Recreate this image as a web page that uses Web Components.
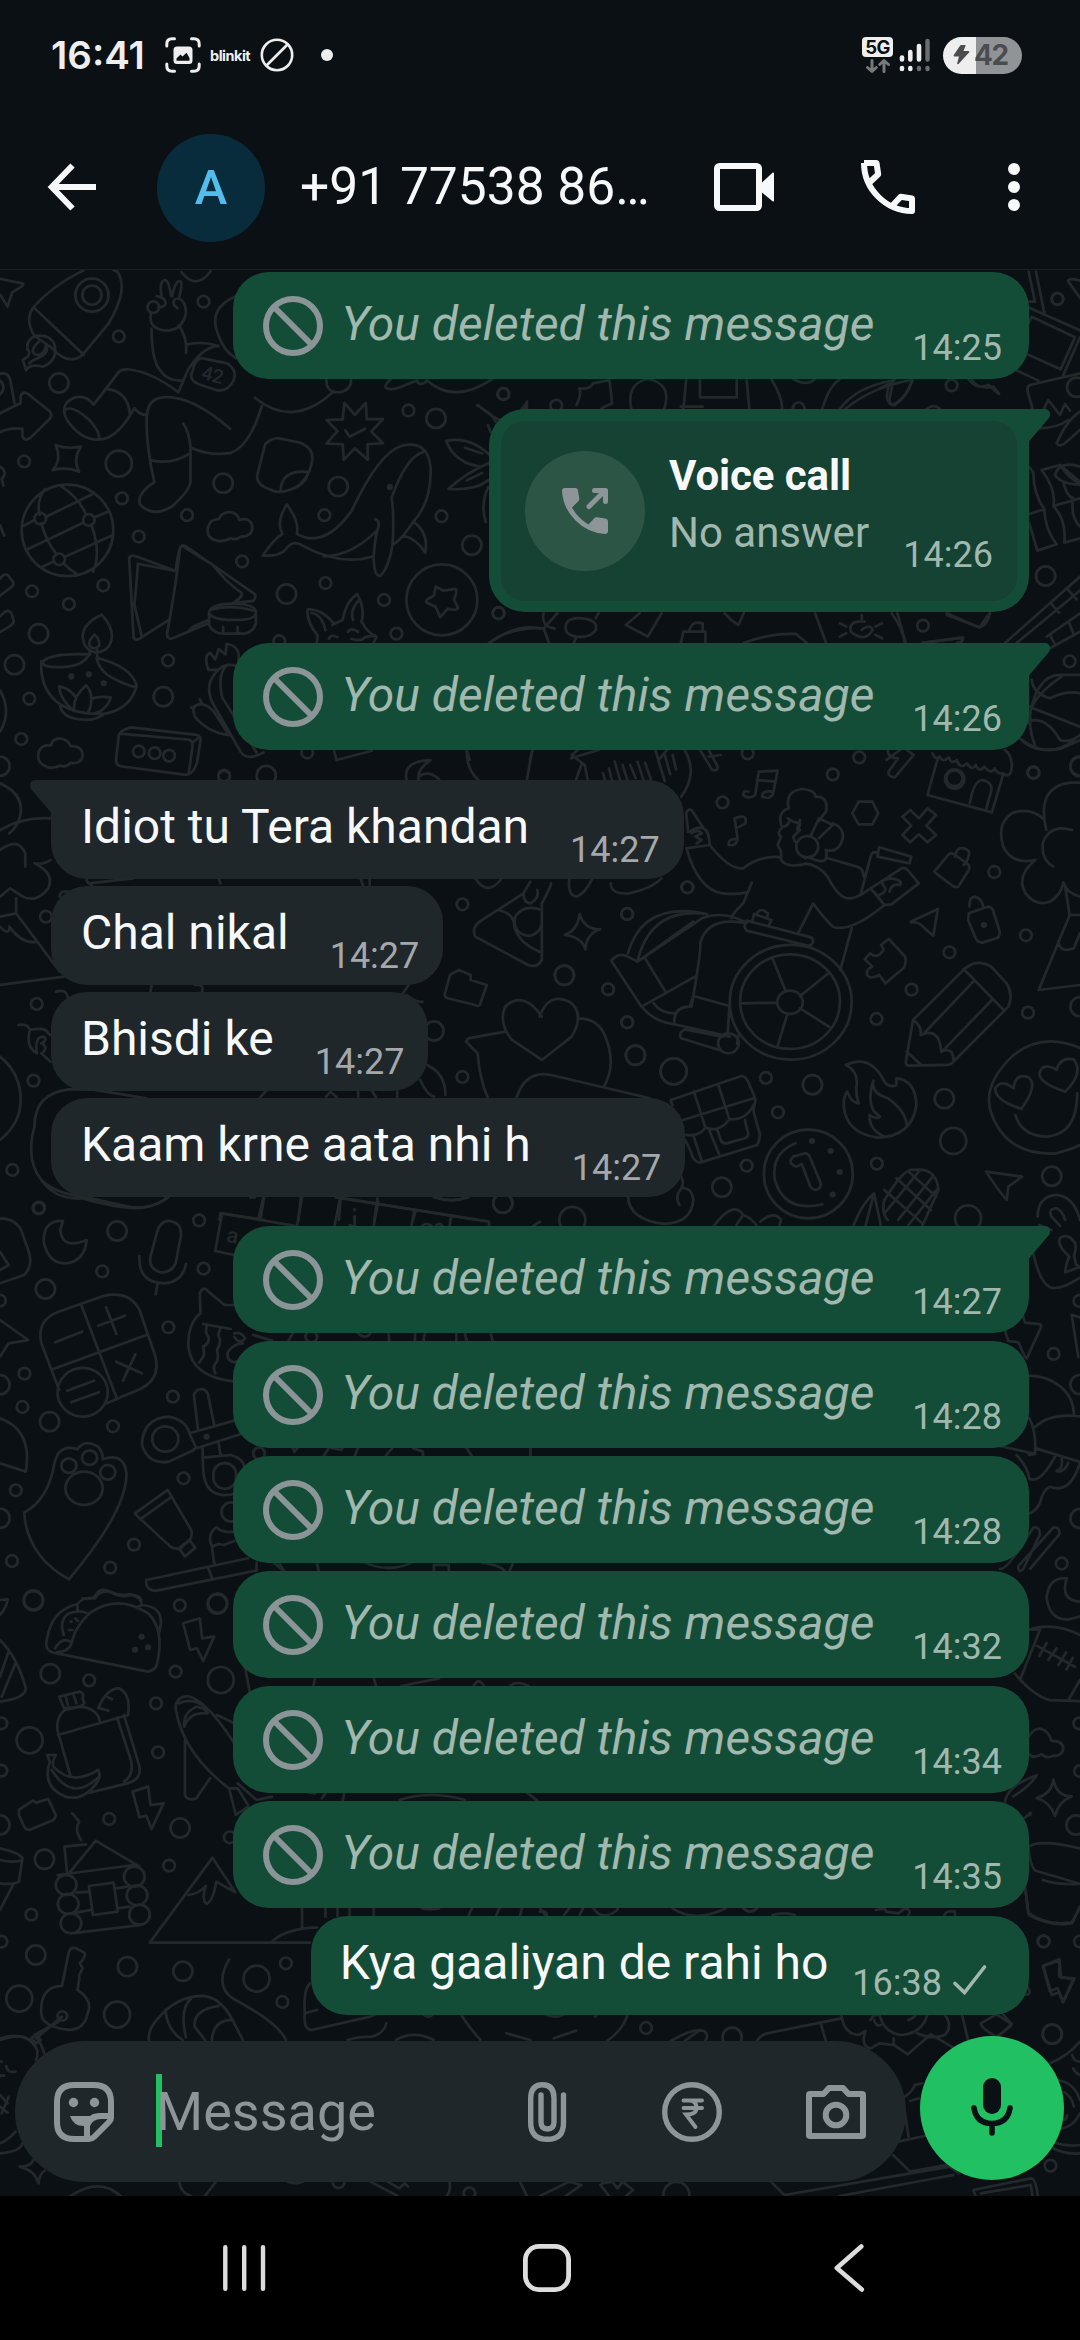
<!DOCTYPE html>
<html lang="en">
<head>
<meta charset="utf-8">
<title>Chat</title>
<style>
html,body{margin:0;padding:0;background:#0b1014}
body{width:1080px;height:2340px;overflow:hidden;font-family:Roboto,"Liberation Sans",sans-serif;color:#f7f8fa}
</style>
</head>
<body>
<phone-screen></phone-screen>
<script>
const define = (name, html, setup) => customElements.define(name, class extends HTMLElement {
  constructor(){
    super();
    const root = this.attachShadow({mode:'open'});
    const t = document.createElement('template');
    t.innerHTML = html;
    root.append(t.content.cloneNode(true));
  }
  connectedCallback(){ if (setup) setup(this, this.shadowRoot); }
});

/* ---------- icons ---------- */
const ICONS = {
  back:['0 0 48 48','<path d="M24.5 2.5 3.8 24 24.5 45.5M4 24H48" fill="none" stroke="currentColor" stroke-width="6"/>'],
  video:['0 0 60 48','<rect x="3" y="3" width="42" height="42" rx="2.5" fill="none" stroke="currentColor" stroke-width="6"/><path d="M48 19.5 58.5 9.8Q60 9 60 10.8V37.2Q60 39 58.5 38.2L48 29.5Z" fill="currentColor"/>'],
  call:['0 0 54 54','<path d="M3 3H15.500L17.200 14.300 8.300 22.700M3 3C3 29 25 51 51 51V38.500L39.700 36.700 31.500 45.500" fill="none" stroke="currentColor" stroke-width="6" stroke-linejoin="round"/>'],
  more:['0 0 12 48','<g fill="currentColor"><circle cx="6" cy="6" r="6"/><circle cx="6" cy="24" r="6"/><circle cx="6" cy="42" r="6"/></g>'],
  ban:['0 0 60 60','<g fill="none" stroke="currentColor" stroke-width="6"><circle cx="30" cy="30" r="27"/><path d="M11.5 11.5 48.5 48.5"/></g>'],
  block:['0 0 34 34','<g fill="none" stroke="currentColor" stroke-width="2.6"><circle cx="17" cy="17" r="15.2"/><path d="M6.5 27.5 27.5 6.5"/></g>'],
  shot:['0 0 36 36','<g fill="none" stroke="currentColor" stroke-width="3" stroke-linecap="round"><path d="M1.8 9V7Q1.800 1.800 7 1.800H9.500M26.500 1.800H29Q34.200 1.800 34.200 7V9M34.200 27V29Q34.200 34.200 29 34.200H26.500M9.500 34.200H7Q1.800 34.200 1.800 29V27"/></g><path fill="currentColor" fill-rule="evenodd" d="M12 9.500H24Q27.500 9.500 27.500 13V23.500Q27.500 27 24 27H12Q8.500 27 8.500 23.500V13Q8.500 9.500 12 9.500ZM11.500 23.800H24.500V21L21.500 15.800 17.500 19.500 15.500 17.500 11.500 21.500Z"/>'],
  arrows:['0 0 24 14','<g fill="none" stroke="currentColor" stroke-width="3" stroke-linecap="round" stroke-linejoin="round"><path d="M6 1.500V12M1.500 8.500 6 12.500 10.300 8.500M18 12.500V2M13.700 5.500 18 1.500 22.500 5.500"/></g>'],
  signal:['0 0 32 34','<g stroke="#eee" stroke-width="4.600" stroke-linecap="round"><path d="M3 19.500V21.500M11.300 14V21.500M20 8V21.500"/><path d="M3 30V31M11.300 30V31"/></g><g stroke="#6b6e70" stroke-width="4.400" stroke-linecap="round"><path d="M28.500 3V21.500M20 30V31M28.500 30V31"/></g>'],
  bolt:['0 0 17 20','<path fill="currentColor" d="M7 .8Q7.500 0 8.500 0H12Q13 0 12.500 1L10.500 6H15.500Q17 6.200 16 7.500L5.500 19Q4 20 4.200 18.200L6 11.500H1.500Q0 11.300 .8 10Z"/>'],
  check:['0 0 34 30','<path d="M2 18.500 11.500 27.500 31.500 2" fill="none" stroke="currentColor" stroke-width="3.600" stroke-linecap="round"/>'],
  missed:['0 0 46 46','<path fill="currentColor" d="M2.500 0H13.500Q15.500 0 15.900 2L17.300 10.500Q17.500 12 16.300 13.300L10 19.500Q16 30.500 26.500 36.500L32.500 30Q33.500 29 35 29.200L43.500 30.500Q46 31 46 33V43Q46 46 43 46Q26 45 13.500 32.500Q1 20 0 3Q0 0 2.500 0Z"/><path d="M27 18.500 42 3.500M32.500 2.500H43.500V13.500" fill="none" stroke="currentColor" stroke-width="5" stroke-linecap="round" stroke-linejoin="round"/>'],
  sticker:['0 0 60 60','<path d="M20 3H40Q57 3 57 20V36Q57 38 55 40L40 55Q38 57 35 57H20Q3 57 3 40V20Q3 3 20 3Z" fill="none" stroke="currentColor" stroke-width="6"/><circle cx="19.500" cy="20.500" r="4.700" fill="currentColor"/><circle cx="40.500" cy="20.500" r="4.700" fill="currentColor"/><path d="M16 34H36Q38 31.500 45 31H57V37H47Q39 37 36 44V57H30V44Q19 44 16 34Z" fill="currentColor"/>'],
  clip:['0 0 38 60','<path d="M35.500 13V41Q35.500 57.300 19.500 57.300Q2.700 57.300 2.700 41V17Q2.700 2.700 14.500 2.700Q26 2.700 26 16V40Q26 47 19.500 47Q13 47 13 40V13" fill="none" stroke="currentColor" stroke-width="5.400" stroke-linecap="round"/>'],
  rupee:['0 0 60 60','<circle cx="30" cy="30" r="27.300" fill="none" stroke="currentColor" stroke-width="5.400"/><path d="M21.500 18.500H40M21.500 26H40M22 18.500H27Q34.500 18.500 34.500 26Q34.500 32.500 24 32.500L33.500 45" fill="none" stroke="currentColor" stroke-width="3.900" stroke-linecap="round"/>'],
  camera:['0 0 60 54','<path fill="none" stroke="currentColor" stroke-width="6" stroke-linejoin="round" d="M4 9H17.500L23 3H37L42.500 9H56Q57 9 57 10V50Q57 51 56 51H4Q3 51 3 50V10Q3 9 4 9Z"/><circle cx="30" cy="30" r="10.300" fill="none" stroke="currentColor" stroke-width="6"/>'],
  mic:['0 0 42 58','<rect x="12" y="0" width="18" height="36" rx="9" fill="currentColor"/><path d="M3 30Q5.500 45.500 21 45.500Q36.500 45.500 39 30M21 46V55" fill="none" stroke="currentColor" stroke-width="5.600" stroke-linecap="round"/>'],
  recents:['0 0 42 46','<path d="M2.300 2.300V43.700M21.200 2.300V43.700M40 2.300V43.700" stroke="currentColor" stroke-width="4.400" stroke-linecap="round"/>'],
  home:['0 0 48 48','<rect x="2.400" y="2.400" width="43.200" height="43.200" rx="13.500" fill="none" stroke="currentColor" stroke-width="4.800"/>'],
  prev:['0 0 30 48','<path d="M27.300 2.500 2.800 24 27.800 45.500" fill="none" stroke="currentColor" stroke-width="4.600" stroke-linecap="round" stroke-linejoin="round"/>']
};
define('ui-icon', '<style>:host{display:block;flex:none}svg{display:block;width:100%;height:100%;overflow:visible}</style><svg></svg>', (el, root) => {
  const [vb, body] = ICONS[el.getAttribute('name')];
  const [, , w, h] = vb.split(' ').map(Number);
  el.style.width = w + 'px';
  el.style.height = h + 'px';
  const s = root.querySelector('svg');
  s.setAttribute('viewBox', vb);
  s.innerHTML = body;
});

/* ---------- wallpaper ---------- */
/* Each sheet has its own origin and scale; s/m/l are bubbles of radius 6, 10 and 13. */
const SHEETS = [
 {o:[0,260],k:[.3444,.3444],
  s:'591,121 345,222 1461,389 1186,437 70,585 354,692 543,741 403,803 942,741 1282,744 703,875 300,945 945,938 93,962 200,999 1115,987 1447,1025 1151,1085 811,1107 488,1163 85,1274 62,1391 892,1430 651,1500 117,751 258,755 172,869 403,1427 449,1432 491,1439 445,137',
  m:'171,357 1266,460 648,648 982,658 1370,828 832,970 112,1085 42,1175 474,1268 773,1497 0,1470 267,102',
  l:'345,591',
  p:'M243 30Q150 75 95 140Q72 175 100 220L150 255Q200 310 240 275L315 185Q365 100 350 55Q345 30 330 30M98 138 243 275M315 102A48 48 0 1 0 219 102A48 48 0 1 0 315 102M105 220Q75 230 80 260Q95 275 66 290L76 320Q85 300 125 310Q170 290 158 245Q145 215 105 220M118 232Q80 265 105 275Q125 280 133 250Q145 270 110 285Q95 290 85 300'
  +'M0 55 65 68Q70 70 65 75L35 95 22 135 0 100M438 155Q430 205 490 205Q530 200 540 155Q540 120 520 112Q500 110 505 130L515 140M470 110Q460 60 480 58Q490 60 497 105M500 105Q510 55 525 62Q530 70 520 110M455 105Q485 110 480 130Q470 140 460 135M440 200Q440 290 465 320Q485 352 530 350M520 190Q545 230 540 270M545 245Q590 235 635 250Q590 250 545 320L518 384Q440 325 375 318Q355 315 345 325L272 420Q250 390 215 400Q170 420 195 465Q240 530 300 520Q340 510 375 455L390 430Q405 450 427 450M190 435Q210 420 260 465Q290 500 288 518M310 375Q370 380 377 445M740 400Q850 490 965 385M760 425Q725 540 670 560Q610 570 555 545M427 450Q430 400 480 398Q560 395 668 490M427 440Q420 520 448 645Q395 680 407 710Q445 750 500 715Q550 670 553 645V545Q550 500 532 475M440 582Q500 595 550 562M585 285 660 300Q690 320 678 350Q660 385 625 377L575 360Q545 345 560 320Q565 290 585 285M635 220Q600 140 685 105M635 220Q650 265 685 285M948 345Q945 385 985 384Q1020 380 1020 345M1120 370Q1130 380 1160 370L1210 350Q1220 370 1240 350Q1320 420 1430 345M1135 345Q1110 370 1125 373M527 35Q570 90 612 32'
  +'M0 330Q25 325 30 350L42 415M0 445Q30 430 60 415V395Q65 380 80 388L145 440Q152 450 145 460L90 515Q70 530 65 510V490Q30 485 0 500M162 538Q195 550 235 542Q210 580 230 615Q195 600 153 610Q180 580 162 538M0 600Q25 615 5 635L10 655M0 770 12 800M0 925Q15 905 25 918L38 935Q42 945 30 952L0 975M0 1035Q25 1005 35 1030L40 1050Q40 1060 0 1080M0 350Q20 370 0 390'
  +'M329 785A133 133 0 1 0 63 785A133 133 0 1 0 329 785M130 665Q105 700 115 740M120 765Q135 820 165 855M68 772 100 755M135 745 268 680M80 840 243 762M273 748 315 730M125 890 157 875M188 862 325 800M175 655Q230 690 250 740M265 768Q295 850 270 905M183 880Q210 905 225 913'
  +'M375 865Q380 855 395 860L510 903 400 882Q398 930 390 1000L412 1095Q400 1108 388 1098ZM412 1095 490 1045M510 903Q515 860 523 835Q530 822 545 835L740 970Q745 980 735 990L690 995M523 835Q510 950 485 1085Q485 1105 505 1097L605 1055M530 830Q590 870 615 882Q660 940 700 965Q710 975 675 997M545 1080 560 1065 605 1045M607 1022Q615 998 680 998Q745 1000 743 1025Q740 1048 675 1045Q610 1045 607 1022V1060Q620 1085 650 1085H710Q735 1080 743 1055V1025M615 1015Q670 1000 735 1018M648 1065V1083M690 1065V1083'
  +'M630 815Q600 810 603 780Q610 750 635 753Q645 730 670 732Q690 735 695 755Q730 745 733 778Q730 805 700 803Q685 815 670 808Q645 820 630 815M137 1472Q105 1460 112 1430Q120 1405 147 1410Q155 1385 180 1390Q200 1395 205 1412Q240 1410 240 1440Q235 1465 205 1460Q190 1475 175 1468Q155 1478 137 1472'
  +'M295 1030Q240 1055 240 1095Q245 1135 280 1140Q320 1135 325 1095Q325 1060 295 1030M275 1088Q255 1105 260 1120Q275 1135 288 1120Q290 1100 275 1088M262 1135Q250 1180 180 1182Q120 1185 125 1165Q150 1140 262 1145M120 1165Q115 1250 175 1290Q220 1320 300 1318Q380 1305 397 1235Q380 1180 280 1155Q290 1200 340 1220Q370 1235 395 1240M282 1130Q280 1150 285 1155M175 1295Q180 1325 220 1332Q270 1342 300 1320M215 1310Q170 1270 173 1238Q205 1245 220 1270M215 1310Q210 1270 250 1235Q265 1250 265 1275Q265 1300 255 1315M265 1275Q280 1265 322 1270Q310 1305 280 1315'
  +'M345 1380Q350 1365 380 1357L565 1378Q585 1380 582 1395L572 1460Q560 1495 540 1495L350 1470Q335 1465 337 1450ZM348 1375 550 1393Q562 1400 558 1420L548 1490M560 1400 580 1385'
  +'M763 858Q795 810 820 795Q800 760 833 710Q870 760 862 795Q940 840 1020 730Q1100 560 1165 540Q1240 520 1250 600Q1255 700 1200 760Q1160 820 1140 825Q1130 890 1105 917Q1085 920 1085 860Q990 890 880 830Q850 810 830 840Q810 862 763 858M1085 860Q1090 800 1097 780Q1105 760 1090 752M1095 785Q1020 860 940 860M1140 825Q1145 740 1137 690Q1180 570 1230 557M1200 760Q1245 790 1235 850Q1210 810 1170 800M1133 655v6'
  +'M1000 415 1030 450 1062 415 1065 462 1112 462 1078 498 1112 532 1067 535 1068 580 1030 547 998 580 995 535 948 533 980 497 948 465 995 463ZM1003 495 1015 513 1060 490M770 535Q790 515 810 518L870 530Q910 545 907 580Q895 650 840 668Q810 680 780 665Q740 650 748 620ZM815 672Q815 610 890 615M840 668Q890 650 893 620'
  +'M1386 987A103 103 0 1 0 1180 987A103 103 0 1 0 1386 987M1265 948 1287 960 1322 955Q1330 960 1318 985L1330 1010Q1325 1020 1300 1012L1278 1037 1265 1007 1240 995Q1230 988 1260 975Z'
  +'M1385 422Q1430 445 1440 470M1395 600Q1320 590 1295 525Q1370 510 1430 575M1417 480 1425 500M1350 545 1400 562M1418 590Q1350 620 1302 665Q1380 670 1417 640M1355 640 1400 618M1417 660Q1395 710 1410 760M1515 432 1530 415V432M1425 1110Q1500 1055 1568 1070'
  +'M920 1110 922 1090Q890 1050 893 1015Q930 1010 970 1055M905 1025Q935 1030 945 1075M995 1045Q1005 990 1037 970Q1060 1010 1050 1050Q1065 1080 1093 1095L1085 1110M1040 990Q1015 1020 1025 1045M955 1100Q960 1085 980 1095M1010 1080Q1020 1065 1040 1080M1020 1100Q1050 1110 1060 1095L1090 1090M965 1060 995 1045'
  +'M605 1190Q590 1150 610 1140L625 1160 635 1130 655 1145 658 1115Q700 1120 692 1165M605 1190 630 1190M690 1180Q640 1160 610 1225Q600 1260 625 1300L700 1430Q720 1455 765 1430M660 1175Q630 1200 645 1270L745 1430M560 1300Q585 1275 620 1310L665 1380Q600 1370 565 1325ZM555 1300H565M580 1275 585 1285M970 1425 977 1452 1080 1425M1180 1508Q1170 1455 1250 1452Q1210 1480 1215 1508M1215 1500Q1245 1480 1275 1508M1355 1425Q1355 1480 1388 1508M1545 1425 1530 1508M0 1250Q35 1310 0 1370M0 1520Q45 1540 55 1568',
  d:'207,1209 258,1203 301,1229 1132,659',
  t:'<text x="582" y="345" font-size="56" transform="rotate(14 582 345)">42</text>'},
 {o:[0,740],k:[.4592,.3333],s:'85,1403 27,1290 73,1022 80,792 100,530 488,107 1007,493 1366,522 1324,748 1366,847 1007,1011 1497,442',m:'1229,706 1384,946 945,873 1095,1390',l:'1467,994',
  p:'M0 130Q50 160 45 220Q40 260 20 280M0 270Q50 230 110 235M0 330Q40 290 55 340V380M75 370Q95 375 110 360M75 370Q120 400 105 445Q80 490 50 470L22 445 0 470M35 475V520L130 695M35 520 0 530M0 560Q20 590 20 560Q50 615 80 605M0 735 140 710M122 755Q145 745 148 775M40 855Q60 850 65 870Q100 860 105 880L110 885M65 870Q55 920 80 940Q75 890 95 890Q105 900 90 910Q105 920 95 935M90 940 110 965M0 950Q45 1000 45 1080Q45 1150 0 1200M150 1048Q75 1060 75 1160Q55 1260 90 1320Q120 1360 180 1370L290 1403Q340 1405 365 1370M150 1048H200L320 1075M330 735 328 755M425 735Q445 730 440 755M875 765 890 735M885 765Q910 790 920 785M565 1075 580 1052M710 1070 720 1055 735 1075M780 1055V1075M810 1052 820 1075M865 1052V1075M930 975Q970 1000 970 1065M915 1020Q930 1065 945 1070M1035 890M480 430Q475 410 478 410M195 430 290 415M200 435Q185 425 190 415M785 415 790 435M805 415V435M130 470Q130 450 150 455M985 700 1000 690 1025 705V720L1060 735 1045 795Q1040 800 1035 795L975 775Q965 770 970 755L980 705ZM1200 430Q1200 440 1180 490V660Q1170 685 1150 675L1035 590Q1025 560 1050 540L1140 460 1155 425M1140 460Q1140 490 1155 490Q1175 475 1170 450M1085 510Q1120 520 1120 560Q1130 610 1175 635M1180 510Q1140 490 1122 530Q1115 580 1150 588Q1175 585 1180 550M1240 415Q1235 465 1255 470 1275 460 1290 415M1330 430Q1330 465 1370 460 1420 445 1440 415M1035 415Q1060 470 1090 420'
  +'M1180 830Q1140 750 1100 800Q1085 850 1115 900L1180 960 1245 890Q1275 820 1240 785Q1195 755 1175 830M1258 835Q1300 835 1315 880Q1345 970 1315 1040M1100 875 1020 895 1015 905 1040 940Q1045 1020 1062 1072M1125 1072Q1145 990 1200 1005L1415 1075M555 1372H545M575 1372 567 1440M655 1372 650 1440M742 1372 738 1440M822 1375 815 1440M480 1420 575 1440M480 1420 478 1440M735 1372 1040 1440M905 1410 900 1440M772 1408v3M772 1430 V1440M945 1372Q985 1390 1020 1372'},
 {o:[540,740],k:[.3444,.3333],s:'603,40 927,52 850,103 1433,99 530,187 428,442 253,522 1319,396 1411,586 1189,637 198,748 1079,749 1417,818 977,837 253,847 656,1014 691,1117 600,1277 978,1271',m:'71,706 277,946 791,1034 1174,1076 528,1342 1486,1309 1568,800 1568,80',l:'388,994 1200,1203 94,1440 1243,1435',
  p:'M92 45 130 75 138 118M120 75 105 118M92 45 110 30M420 30Q460 100 410 170M183 100 188 118M200 85 208 118M217 65 232 118M240 75 253 118M262 75 278 115M283 65 300 118M305 68 322 118M335 30 362 123M362 43 378 103M385 45 395 88M465 30 500 90Q518 95 515 78L490 30M490 50 525 45M1010 30Q1010 55 1040 55L1012 95Q1010 110 1030 112L1085 45 1065 30M1140 40Q1145 60 1160 50Q1170 70 1187 52Q1195 75 1210 60Q1220 90 1240 70Q1255 95 1265 75Q1275 100 1290 80Q1310 105 1320 85Q1330 105 1345 100Q1370 120 1370 70Q1365 40 1350 30M1155 55 1125 165 1312 217 1345 103M1248 190Q1260 120 1285 120Q1320 130 1308 160L1295 210M1227 115A22 22 0 1 0 1180 115A22 22 0 1 0 1227 115M1400 0Q1480 60 1550 0'
  +'M605 155Q590 150 590 165Q605 180 625 165L635 95 690 92 677 160Q670 180 645 170Q645 150 677 155M630 120 682 125M565 235Q590 225 597 235V250L575 262M565 235 573 290Q575 320 548 315Q545 295 573 298M700 255Q690 215 722 205Q710 155 760 147Q800 150 800 170Q840 170 830 215L808 245M755 240Q740 280 755 270M720 235 735 245 755 250 750 275 735 290 740 305 M725 240Q720 260 705 260Q685 280 700 290L690 315 700 335V360Q715 385 770 372M785 290 810 235 850 255 810 295M850 250Q880 260 880 290Q870 340 830 330Q840 370 805 362L780 352M808 320A32 32 0 1 0 744 320A32 32 0 1 0 808 320M770 355 780 352M960 185H925L907 220 925 253H965L982 220 965 185ZM1075 210 1100 235 1125 205 1150 225 1122 257 1150 285 1125 307 1100 283 1075 307 1052 285 1078 257 1052 230Z'
  +'M425 225Q425 205 440 210L475 265M425 225 430 275M435 275Q480 245 490 290L493 315 425 325M440 280Q460 265 470 280L450 290 470 300 455 310M425 325Q460 450 530 460Q570 465 600 457M493 315Q550 390 590 385Q640 345 700 352M770 370Q810 375 835 410Q870 480 900 475Q920 475 960 445M615 428 590 490Q560 520 555 535M835 355 920 380Q940 385 940 410M932 460 960 350Q965 330 980 340M985 322 1078 350 1073 370 980 350ZM960 445 1050 385Q1060 380 1067 390L1100 430 1020 493 1000 495ZM1000 495 970 455M985 465Q1010 455 1000 440Q980 420 1020 415 1055 420 1045 435 1020 430 1015 455M1000 495Q900 580 850 560Q820 530 793 490L752 575M905 565 872 690'
  +'M1230 325Q1250 330 1245 345 1240 370 1230 375M1205 350Q1210 320 1230 325M1145 395 1185 345Q1195 335 1205 345L1240 370Q1250 380 1245 390L1215 440Q1205 445 1195 435L1150 400M1247 500Q1245 470 1265 470Q1285 480 1287 500M1245 520 1300 500Q1310 500 1315 510L1335 575Q1335 590 1325 595L1285 608Q1270 608 1265 595L1243 540ZM1077 545 1155 507 1142 587 1112 560Q1100 545 1077 547M115 522Q130 570 175 568Q135 580 132 628Q120 590 72 585Q110 570 115 522'
  +'M255 640Q300 480 485 522M283 665Q320 500 485 522M283 665 470 535Q530 510 600 548M207 662Q230 635 255 650L283 665M283 665 445 545M207 662 295 800 450 710M305 655 365 757M440 800Q470 620 465 610Q485 530 590 548M390 845Q390 800 435 800M330 790Q350 820 390 820M295 800Q330 845 390 853M445 768 550 798M435 800 445 768M390 853 550 890M550 800 545 880M578 880 572 910M420 868 Q400 880 410 895L520 930M420 868 530 890M600 542 780 590Q800 595 790 612Q785 620 770 615L600 572Q588 560 600 542M617 540 622 522 672 540 665 555M630 520Q640 500 662 520L660 530M577 910A30 30 0 1 0 517 910A30 30 0 1 0 577 910M905 787A177 172 0 1 0 551 787A177 172 0 1 0 905 787M871 785A145 142 0 1 0 581 785A145 142 0 1 0 871 785M763 787A37 35 0 1 0 689 787A37 35 0 1 0 763 787M675 655 712 750M755 768 835 702M588 790 688 788M718 823 690 918M755 805 842 862'
  +'M943 658 958 640Q980 660 998 628L990 615 1013 597 1060 650Q1065 670 1055 685L1003 730 985 705Q960 720 950 705Q945 690 965 680ZM1083 840 1235 685Q1270 655 1310 680L1355 730Q1375 765 1360 800L1205 960Q1195 975 1180 975L1070 977Q1060 975 1063 960ZM1083 840Q1110 860 1105 885Q1160 860 1165 935Q1200 920 1200 960M1115 880 1258 725M1170 932 1312 780M1230 687 1348 812M1065 935 1105 973M888 975Q960 940 1000 1025Q1015 1045 1035 1035V1015Q1090 1020 1093 1095Q1080 1190 980 1193Q890 1180 882 1100Q880 1070 892 1055Q905 1090 925 1090Q915 1060 920 1030Q920 990 888 975M968 1022Q960 1060 1010 1075Q1060 1110 1065 1155M968 1022Q950 1080 970 1115L987 1130Q975 1140 957 1125Q955 1170 1000 1190M1580 930Q1460 870 1370 950Q1280 1040 1312 1125Q1360 1250 1500 1240Q1550 1225 1568 1215M1380 1125Q1400 1190 1475 1190Q1560 1180 1560 1060M1398 1107Q1320 1080 1322 1045Q1340 1015 1375 1045Q1380 1000 1415 1010Q1450 1030 1398 1107M1525 1055Q1450 1030 1450 1000Q1460 965 1500 990Q1510 950 1550 958Q1580 1000 1525 1055'
  +'M1470 270Q1440 140 1540 128H1568M1438 360Q1370 375 1345 320Q1325 250 1370 220Q1420 200 1460 235M1438 360Q1380 410 1410 460Q1440 500 1480 485Q1510 470 1520 428Q1530 460 1568 470M1545 270Q1480 250 1460 310Q1455 360 1490 380M1525 440 1538 525H1568M1538 525 1448 750 1568 735M1505 605Q1510 640 1550 625L1568 580'
  +'M380 1080 585 1008Q600 1008 610 1040 625 1070 625 1085 620 1105 620 1115L638 1180Q640 1200 630 1215L465 1268Q445 1265 440 1240L422 1200M380 1080Q380 1090 385 1095M415 1140 620 1075M447 1055 480 1162M517 1032 550 1138M425 1185Q465 1190 480 1162Q520 1180 550 1138Q600 1140 620 1095M445 1185 470 1265M490 1168 520 1242M515 1170 525 1200Q530 1215 550 1208L595 1195Q608 1190 603 1175L595 1140M908 1302A129 133 0 1 0 650 1302A129 133 0 1 0 908 1302M742 1210Q670 1240 682 1320Q710 1420 820 1393M735 1250 770 1240Q780 1240 785 1255L815 1330Q818 1345 800 1350Q790 1348 785 1340L760 1272 745 1280Q725 1275 728 1260ZM410 1310Q420 1330 410 1345Q440 1340 445 1380Q440 1450 360 1452Q260 1440 255 1370M405 1395Q390 1370 410 1345M505 1458Q560 1380 590 1425M570 1455 590 1425Q610 1430 630 1458M640 1445Q680 1410 700 1440L695 1458M910 1458Q935 1390 970 1360L990 1458M970 1360 945 1458M1000 1380Q1060 1280 1085 1290Q1150 1280 1157 1350L1110 1458M1000 1380Q990 1420 1010 1440M1000 1350 1110 1450M1035 1315 1135 1410M1070 1295 1150 1370M1100 1295 1000 1420M1140 1310 1040 1440M1155 1345 1070 1455M1295 1295 1400 1310 1360 1340 1355 1380Q1330 1350 1295 1295M1445 1430Q1445 1370 1500 1365Q1550 1370 1568 1440M1485 1470 1450 1455M1510 1458 1485 1430Q1475 1405 1500 1405Q1515 1410 1525 1440',
  d:'1289,555 790,1203 844,1233 870,1296 850,1364'},
 {o:[220,260],k:[.5485,.3333],s:'517,402 613,437 1055,445 508,1060 1527,117',
  p:'M650 435Q660 400 655 385Q675 390 680 370L710 360 715 430Q700 440 695 447M750 447Q740 370 780 357Q825 370 810 447M875 357V412H942V357M850 357 845 447M960 357 965 447M1005 357Q1025 410 1025 447M840 440H880M1098 447Q1110 380 1130 357M1140 447Q1190 380 1260 360M1130 447Q1160 380 1230 360M1220 375Q1210 420 1225 435Q1250 420 1262 360M1370 357Q1380 390 1410 380L1420 400M1045 357Q1070 380 1085 357M555 447 560 425M470 435Q495 470 510 480M490 1149Q530 1100 590 1105L615 1060M590 1105 600 1149M590 1060Q585 1100 610 1105M630 1105Q630 1070 660 1075Q690 1080 685 1110Q675 1135 650 1130Q630 1125 630 1105M650 1130 645 1149M690 1060 685 1075M740 1095 765 1060M740 1095 780 1130 805 1060M840 1149 845 1115H885V1149M855 1115Q860 1080 880 1090V1115M920 1060Q930 1080 945 1095L955 1060M955 1149Q1000 1120 1050 1122L1070 1149M1085 1060 1105 1149M1235 1060 1250 1149M1170 1110Q1185 1090 1190 1110Q1175 1150 1150 1115Q1145 1080 1175 1085M1170 1065V1078M1130 1090 1142 1100M1130 1130 1142 1120M1207 1090 1195 1100M1207 1135 1195 1125M1325 1065 1385 1102 1402 1062M1280 1149 1355 1133 1350 1149M690 1470 640 1495M450 1470 455 1500M565 1500 570 1470M800 1500 815 1470M1240 1470 1215 1500'},
 {o:[880,260],k:[.3333,.3333],s:'532,117 215,376 129,1097 569,1204 460,1537',m:'590,382 497,948 224,1557 600,1518',
  p:'M446 35 465 125H446M468 35 493 158M605 120 565 65Q560 52 600 62M447 143 610 215M445 190 455 170 585 232 542 328 442 283M600 232 550 345M408 330 475 362M600 340 450 375Q440 380 443 395L458 447M490 450 505 420 540 465 555 432 570 452M475 505Q530 505 565 480M530 550Q560 480 600 455M530 550Q540 565 560 545L600 510M447 620 460 638Q460 700 493 748L447 762M493 748Q495 810 530 853L472 872 448 790M485 630 540 615 600 665M485 630Q530 690 520 738L600 715M520 738Q560 780 553 848L600 835M550 665Q560 710 580 715Q570 770 600 800M600 620Q540 600 525 645Q540 670 600 675M540 615Q570 660 600 670M375 1149 600 950M410 1149 600 992M510 1165 600 1115M500 1130 600 1060M513 1030 537 1058M563 988 590 1018M567 1088 580 1120M510 1125 523 1150M445 1390Q465 1245 540 1245H600M420 1435Q460 1480 540 1467L600 1440M455 1260Q460 1300 510 1315Q560 1290 600 1300M545 1250Q470 1300 452 1350Q445 1410 465 1455M447 1340 600 1400M450 1382Q500 1370 540 1440Q570 1450 600 1425M0 385 40 365M30 410Q25 440 45 435Q80 410 98 360M30 410 40 360M265 357Q290 390 325 375L357 402M140 447Q160 430 180 447M200 1060 295 1102Q320 1100 330 1060M75 1149Q70 1110 35 1060M130 1149 245 1133Q255 1145 230 1149'},
 {o:[0,1180],k:[.3444,.3333],s:'112,85 578,121 297,274 591,266 489,442 71,581 502,650 65,681 328,739 46,931 752,820 533,895 389,1094 35,1143 320,1163 0,362 904,470',m:'1460,70 340,153 132,327 144,725 0,614 0,1015 97,1260 632,1270 671,996',
  p:'M120 0Q160 60 240 55Q360 90 420 82Q470 70 490 50M183 123Q125 120 127 185Q140 250 190 250Q245 245 252 180Q180 210 175 150ZM0 115Q50 115 65 160L85 220Q95 260 70 285L0 310M0 215 25 255 0 270M455 160Q465 120 495 123Q530 130 525 170L510 250Q495 280 465 277Q430 265 437 230ZM405 228Q400 310 480 310Q530 305 540 252M457 315 452 343M645 100 625 213 680 225M645 100 860 138M765 50 750 120M877 50 863 135M988 50 972 135M975 52 1420 125V138M1098 65 1085 138M1203 90 1195 138M1310 110 1305 138M1225 138Q1240 125 1253 138M1265 138Q1275 125 1285 138M1030 110V138Q1025 140 1015 135M1260 50Q1310 70 1360 50M1548 138 1568 125'
  +'M170 395 300 348Q375 330 405 390L450 525Q470 600 400 630L310 670M170 395Q105 420 120 490L172 630M237 378 340 658M155 567 425 465M160 487 238 455M308 382 338 462M285 437 363 407M337 545 412 580M393 523 357 602M195 632 273 602M207 667 287 637M313 637A73 73 0 1 0 167 637A73 73 0 1 0 313 637M0 420 82 480 25 490 0 530M582 400 580 340Q590 315 605 335L652 375H680M582 400Q545 430 547 500Q555 590 680 605M590 432 670 447M600 440Q595 460 605 470Q610 490 590 500Q595 520 590 530L578 548M640 445Q630 465 638 475Q642 490 630 510Q635 530 630 545Q615 560 625 580M680 460Q700 455 712 475Q695 495 680 470M705 490Q680 490 662 515Q655 540 680 547L700 540M735 465 790 482M850 460 838 482M1040 460Q1060 480 1075 460M1128 460 1130 482M1205 482V460M1230 482Q1230 470 1235 460M1325 460V482M1355 482 1350 460M1425 460 1430 482'
  +'M518 777A38 38 0 1 0 442 777A38 38 0 1 0 518 777M563 810 490 845Q430 855 412 795Q415 715 490 710Q540 720 550 760L570 805M550 760 680 722M563 807 700 762M575 750 563 645Q570 625 590 628Q605 635 605 650L622 735M588 805 590 870Q595 950 660 945 680 945 700 930M588 833 670 825Q705 835 710 860M635 790 640 825M685 888A33 33 0 1 0 620 888A33 33 0 1 0 685 888M70 998Q140 960 158 850Q170 790 225 808Q245 775 285 800Q300 820 298 838Q360 815 367 880Q370 990 200 1198Q80 1130 70 998M222 857A22 22 0 1 0 178 857A22 22 0 1 0 222 857M282 833A22 22 0 1 0 238 833A22 22 0 1 0 282 833M335 877A22 22 0 1 0 291 877A22 22 0 1 0 335 877M298 925A54 50 0 1 0 190 925A54 50 0 1 0 298 925M0 715Q95 750 75 875L0 850M392 1000 487 930 555 1050Q560 1070 550 1080L525 1105Q510 1110 495 1100L393 1003M407 1018 495 953M520 1105 550 1080 567 1103 537 1130ZM622 1150 615 1098Q600 1065 628 1042Q645 1060 680 1055M615 1100 635 1092 650 1095 680 1083M425 1200 720 1135M455 1232 745 1172V1148M425 1200Q420 1230 455 1233M605 1165 615 1193M850 803 855 815 865 803M960 803 990 810 995 803M940 828 955 803M1030 828 1040 803M1120 828 1140 803M1200 805 1228 815V828M1355 805 1370 828M1540 828V803M795 1148 820 1170M810 1148 825 1172M920 1148 925 1172M1060 1148Q1130 1180 1195 1148M1260 1172V1155H1303V1172M1400 1148Q1450 1155 1465 1172M1480 1172 1490 1148M240 1255Q260 1260 275 1250Q290 1220 320 1235 350 1255 375 1245 405 1245 410 1260',
  d:'600,770',
  t:'<text x="655" y="185" font-size="64" transform="rotate(10 655 185)">a</text>'},
 {o:[0,1580],k:[.3444,.3333],s:'522,76 259,301 510,275 453,370 459,517 317,717 491,857 91,1004 830,1150 820,1266 4,430 4,572 4,1085 667,772',m:'97,62 146,281 523,744 129,838 104,1125 370,1160 531,1174 0,735 631,72',l:'86,481 641,300 56,1256 340,1304 745,1196',
  p:'M0 60 22 58Q20 80 0 105M0 180Q50 230 75 325Q75 355 0 365M25 215 0 290M45 250 5 350M137 175Q150 90 225 72Q240 50 275 55Q290 30 320 35Q350 50 375 42Q410 50 412 75Q470 80 467 130Q465 150 460 165M137 175Q125 215 165 220L430 275Q450 270 455 255Q480 150 430 100Q340 40 260 100Q220 140 210 180Q205 215 165 217M225 72V95M185 165Q170 120 200 100 230 90 250 98M160 205Q180 170 205 185M412 75 400 80M532 130 580 115 587 175 622 170 590 243 572 205 552 210ZM205 125h3M218 115l8 8M200 150l10 0M188 390 172 350 232 335Q245 340 240 355L245 370Q240 380 188 390M190 345 197 375M212 340 222 370M188 390Q160 415 168 455L205 590M168 465 372 405M372 405Q380 340 345 325Q310 325 285 385M188 385 240 380Q285 390 290 425M310 350 325 358M290 385 315 392M340 413 380 540Q390 585 360 605M360 405 405 560Q410 600 370 610L260 638M137 525H162Q150 545 155 560Q210 620 285 570Q295 590 280 610Q240 665 190 650Q120 620 145 545ZM150 570Q210 670 287 590M385 635 430 620 437 675 475 670 440 747 425 707 405 712ZM55 690 95 662 105 668 140 657 162 705Q160 715 155 720L85 750Q75 750 70 740L55 705ZM210 700 230 725Q215 750 235 780M510 385Q510 350 545 348Q600 360 680 490M510 385Q530 520 665 625L690 625M535 440Q530 400 570 380Q600 385 603 400Q550 395 535 440M520 370Q560 350 600 385M630 405 680 430M537 470V645Q545 665 570 655L610 595M665 625 685 705 720 680M690 625 720 675M690 610 745 660 790 650'
  +'M187 800 250 793M187 800 195 880M200 880 278 782 405 860M168 885 390 855M222 915A30 30 0 1 0 162 915A30 30 0 1 0 222 915M228 972A30 30 0 1 0 168 972A30 30 0 1 0 228 972M236 1030A30 30 0 1 0 176 1030A30 30 0 1 0 236 1030M420 890A30 30 0 1 0 360 890A30 30 0 1 0 420 890M428 946A30 30 0 1 0 368 946A30 30 0 1 0 428 946M435 1004A30 30 0 1 0 375 1004A30 30 0 1 0 435 1004M222 938 258 935M222 998 262 990M335 925 370 920M340 985 375 980M208 1060 410 1035M258 918 330 908 342 995 270 1005ZM0 805Q60 820 65 835L55 905Q40 915 0 910M0 840Q40 850 65 840M40 910 0 990M435 1088 617 833 683 937M435 1088H900M548 945Q580 940 597 918Q585 960 600 972Q620 960 628 905L683 937M790 1085Q830 1045 920 1043M877 985V1043M945 985V1010 M980 985V1008M1015 985V1008M1085 985V1008M1225 985Q1250 990 1275 985M1370 985 1360 1008M1450 985 1440 1008M1515 985 1510 1008M712 265 725 335M915 293 910 318M1085 293 1092 318M1165 318 1275 295M1375 318Q1390 290 1405 318M1480 318Q1500 300 1535 318M895 638 915 640M935 655 945 640M1000 638 995 662M1160 660Q1250 630 1350 660M1530 638 1560 662'
  +'M200 1115Q205 1100 220 1105L245 1118Q250 1125 240 1140L232 1150 240 1165 230 1185V1200L225 1230Q270 1260 255 1300Q245 1350 200 1350Q120 1340 120 1300Q115 1220 180 1218ZM195 1308A14 14 0 1 0 167 1308A14 14 0 1 0 195 1308M180 1310 105 1375M170 1325 100 1365M665 1138Q620 1220 680 1258Q810 1330 830 1380M455 1320Q510 1250 585 1248Q640 1250 675 1320L705 1380M455 1320Q430 1350 432 1380M480 1290Q485 1350 530 1380M555 1255Q520 1290 540 1372M635 1278Q560 1290 565 1340L595 1380M675 1320Q620 1320 615 1380M885 1300Q880 1230 900 1210M885 1300 920 1290M885 1300Q880 1350 905 1350L1075 1310 1090 1303M0 1380Q60 1360 80 1378M1010 1380Q1040 1370 1080 1370 1115 1360 1122 1330M1150 1380Q1200 1350 1260 1380M1340 1305Q1360 1340 1395 1380M1470 1360 1540 1380M1230 1305Q1245 1315 1255 1305',
  d:'411,170 392,209 430,202'},
 {o:[0,1980],k:[.3444,.3333],s:'983,607 1363,640',m:'',l:'',
  p:'M0 175Q80 150 108 210 110 230 105 240M105 170Q125 200 128 220M90 175 105 165 118 180 105 190ZM0 245H5M18 258Q20 280 45 275M0 287H12M0 345 22 370M5 400 25 350M0 380 22 398M0 520Q60 515 65 490M0 490Q25 480 45 455M97 540Q90 560 57 560 100 570 112 610Q115 580 130 572M205 648Q290 590 350 648M520 605Q525 640 555 648M595 648 627 605M835 605Q860 615 880 605M1075 605 1155 648M1125 605 1160 625 1175 610 1185 620M1305 605Q1310 630 1298 648M1510 605 1530 648'},
 {o:[540,1880],k:[.3444,.3333],s:'308,444 1462,184 1482,857',m:'558,472 1487,462',l:'396,945',
  p:'M0 395Q40 420 70 403M160 410 165 403M255 403Q240 450 195 483M40 475 105 452M380 483Q450 440 480 455 490 470 480 483M420 483 465 450M630 483Q640 465 660 460L875 415M815 430 830 483M875 403Q880 460 925 465L945 453Q930 500 960 505L985 490 1027 495V475M985 403Q1000 460 1050 465Q1110 460 1125 403M960 420Q970 400 985 405M970 420Q975 440 990 435M1027 495 1068 523 1135 463 1200 503M1175 403Q1200 440 1175 465Q1140 480 1095 460M1225 403 1243 480M1070 420Q1085 415 1090 405M1280 430 1325 403 1370 432Q1370 440 1325 470Q1280 445 1280 430M1410 30Q1415 80 1420 105Q1480 140 1545 130L1568 80M1460 0Q1500 15 1568 12M1460 258 1508 238 1513 293 1552 295 1518 367 1503 325 1480 333ZM1480 550Q1530 530 1568 485M1545 525Q1550 545 1568 545M1548 565Q1555 580 1568 585M1500 600Q1550 605 1568 660M1520 635Q1545 650 1550 680M1520 720Q1530 720 1530 705M1515 745Q1550 740 1568 700M1490 805Q1530 825 1568 820M1500 790Q1530 800 1568 795M1060 650Q1085 630 1088 615L1110 610M1075 663 1100 655M1060 700 1070 770M1040 785 1130 765M1025 825 1075 875 1180 855M670 905 710 945 1190 860 1215 880M870 948 1200 885M1265 948 1258 930 1425 895Q1440 895 1445 948M1280 940 1425 915 1430 948M0 948 85 905 120 915 75 948M175 915Q195 940 200 948M180 910 210 905 225 925 240 905 270 930 250 948M0 85 15 105M70 105 85 85M115 105 125 85M155 85Q180 125 225 90V85M385 85Q450 130 540 85M590 85Q610 105 630 85M975 90 1000 85 1005 95 1040 100 1060 85Q1080 90 1070 105M1175 105Q1180 90 1205 95V105M675 105Q710 95 740 105M0 95Q20 90 20 105M1415 320Q1430 340 1412 345'},
 {o:[1000,1230],k:[.3333,.5294],s:'161,234 185,630 131,1344 238,134 238,932 240,1022 240,1344',m:'228,1124 157,1519 240,292 240,545',
  p:'M100 45Q120 100 150 108 180 115 240 90M195 80Q200 60 208 50Q170 30 180 15Q205 5 225 25Q230 35 222 48L228 65 240 70M195 80 240 70M75 175 120 178Q125 180 122 185L80 243M75 175 68 160M15 190 25 210 55 212 75 240M240 165 215 160 235 240M87 275Q140 275 180 295Q220 315 222 348M105 372Q150 345 240 352M87 355Q110 380 105 423M0 408 105 423 87 425M105 412 240 438M165 428Q120 480 88 470 85 450 50 425M240 440Q210 500 150 485Q130 490 120 515 110 530 90 535M185 432Q190 450 170 455 190 460 205 440M0 640Q20 645 100 562Q120 560 120 575L70 640Q55 650 55 635L160 562Q180 560 178 575L90 640M200 658Q145 655 140 695Q150 740 210 735L240 730M200 658Q180 700 240 702M85 755Q160 740 240 765M45 838Q100 880 150 888L240 890M85 755 120 755M60 850 120 755M205 888 240 850M110 785 225 825M140 780 118 805M170 790 145 812M198 798 175 822M218 808 200 830M88 955Q105 940 120 942 145 945 155 965 190 965 190 980 185 995 160 993 140 1000 125 990 100 1000 88 990M15 1080Q20 1050 110 1030 90 1050 40 1070M75 1110Q100 1095 90 1105M110 1073Q155 1065 160 1038Q170 1070 215 1070Q175 1080 165 1107Q150 1080 110 1073M85 1165Q120 1150 240 1168M85 1165Q90 1200 105 1210L240 1235M75 1240 85 1290Q140 1315 215 1308L240 1280M130 1390 178 1380V1410L220 1415 190 1458 178 1440 155 1445ZM0 1475 35 1500 0 1520'}
];
define('chat-wallpaper', '<style>:host{display:block}svg{display:block}text{fill:#23292b;font-weight:500}</style><svg width="1080" height="1926" viewBox="0 270 1080 1926"></svg>', (el, root) => {
  const pts = str => (str || '').split(' ').filter(Boolean).map(p => p.split(',').map(Number));
  let out = '';
  for (const sh of SHEETS) {
    const [kx, ky] = sh.k;
    let g = `<g transform="translate(${sh.o}) scale(${sh.k})">`;
    for (const [key, r] of [['s',5.8],['m',9.6],['l',13]])
      for (const [x, y] of pts(sh[key])) g += `<ellipse vector-effect="non-scaling-stroke" cx="${x}" cy="${y}" rx="${r/kx}" ry="${r/ky}"/>`;
    g += `<path vector-effect="non-scaling-stroke" d="${sh.p}"/>`;
    for (const [x, y] of pts(sh.d)) g += `<circle cx="${x}" cy="${y}" r="9" fill="#23292b" stroke="none"/>`;
    if (sh.t) g += `<g stroke="none">${sh.t}</g>`;
    out += g + '</g>';
  }
  root.querySelector('svg').innerHTML = `<g fill="none" stroke="#23292b" stroke-width="2.7" stroke-linejoin="round" stroke-linecap="round">${out}</g>`;
});

/* ---------- status bar ---------- */
define('status-bar', `<style>
:host{display:flex;align-items:center;justify-content:space-between;height:110px;padding:0 58px 0 51px;color:#eee;font-family:Inter,Roboto,sans-serif}
.l,.r{display:flex;align-items:center}
.time{font:600 38.500px/44px Inter,sans-serif;letter-spacing:0;width:114px;white-space:nowrap}
.brand{font:700 14.500px/20px Inter,sans-serif;letter-spacing:-.5px;margin:1px 0 0 9px;width:50px;white-space:nowrap}
.dot{width:12px;height:12px;border-radius:50%;background:#eee;margin-left:27px}
.net{display:flex;flex-direction:column;align-items:center;gap:2px;color:#77797b;width:31px}
.g{box-sizing:border-box;width:31px;height:20px;border-radius:4px;background:#eee;color:#0b1014;font:700 18.500px/20px Inter,sans-serif;text-align:center;letter-spacing:-.5px}
.bat{display:flex;align-items:center;box-sizing:border-box;width:79px;height:37px;border-radius:19px;margin-left:12px;padding-left:10px;background:linear-gradient(90deg,#eee 33px,#909496 33px);color:#4b4c50}
.bat b{font:700 28px/37px Inter,sans-serif;letter-spacing:-1.500px;margin-left:4px}
</style>
<div class="l"><span class="time">16:41</span><ui-icon name="shot"></ui-icon><span class="brand">blinkit</span><ui-icon name="block"></ui-icon><i class="dot"></i></div>
<div class="r"><div class="net"><span class="g">5G</span><ui-icon name="arrows"></ui-icon></div><ui-icon name="signal" style="margin-left:6px"></ui-icon><div class="bat"><ui-icon name="bolt"></ui-icon><b>42</b></div></div>`);

/* ---------- header ---------- */
define('chat-header', `<style>
:host{display:flex;align-items:center;box-sizing:border-box;height:160px;padding:0 60px 6px 48px;border-bottom:1.500px solid #1a1f22}
.avatar{flex:none;width:108px;height:108px;border-radius:50%;background:#092c3d;color:#53bdeb;font-size:49px;font-weight:500;line-height:108px;text-align:center;margin:2px 0 0 61px}
h1{margin:0;font-weight:400;font-size:51.500px;line-height:60px;white-space:nowrap;flex:1;margin-left:35px}
.video{margin-right:87px}.call{margin-right:93px}
</style>
<ui-icon name="back"></ui-icon><div class="avatar">A</div><h1><slot></slot></h1>
<ui-icon class="video" name="video"></ui-icon><ui-icon class="call" name="call"></ui-icon><ui-icon name="more"></ui-icon>`);

/* ---------- messages ---------- */
define('chat-bubble', `<style>
:host{display:flex;position:relative;align-self:flex-end;box-sizing:border-box;height:99px;padding:0 27px 0 29px;border-radius:36px;background:#144d37;--meta:#a1b8af;margin-top:8px}
:host([incoming]){align-self:flex-start;background:#1f272a;--meta:#a5a8aa;padding:0 24px 0 30px;margin-top:7px}
:host([tail]){margin-top:30px;border-top-right-radius:0}
:host([tail][incoming]){border-top-right-radius:36px;border-top-left-radius:0}
:host([deleted]){height:107px;padding-left:30px}
.tail{display:none;position:absolute;left:100%;top:0;width:21px;height:33px}
:host([tail]) .tail{display:block}
:host([incoming]) .tail{left:auto;right:100%;transform:scaleX(-1)}
.tail path{fill:#144d37}:host([incoming]) .tail path{fill:#1f272a}
.body{font-size:48px;line-height:56px;margin-top:18.600px;white-space:nowrap}
.time{font-size:36px;line-height:42px;margin:48.700px 0 0 41px;color:var(--meta);white-space:nowrap}
.ban,.tick{display:none}
:host([deleted]) .ban{display:block;color:#8b9598;margin:24px 18px 0 0}
:host([deleted]) .body{font-size:48px;font-style:italic;color:#a1b8af;margin-top:24.400px}
:host([deleted]) .time{margin-top:54.700px;margin-left:38px}
:host([sent]) .tick{display:block;color:var(--meta);margin:49px 15px 0 11px}
:host([sent]) .time{margin-top:45.700px;margin-left:24px}
</style>
<svg class="tail" viewBox="0 0 21 33"><path d="M-1 0H15.500Q21 0 21 5.500Q21 7.500 19.500 9.500L0 32.500H-1Z"/></svg>
<ui-icon class="ban" name="ban"></ui-icon><span class="body"><slot></slot></span><span class="time"></span><ui-icon class="tick" name="check"></ui-icon>`,
 (el, root) => root.querySelector('.time').textContent = el.getAttribute('time'));

define('call-bubble', `<style>
:host{display:block;position:relative;align-self:flex-end;box-sizing:border-box;width:540px;height:203px;padding:12px;border-radius:36px 0 36px 36px;background:#144d37;margin-top:30px}
.tail{position:absolute;left:100%;top:0;width:21px;height:33px;fill:#144d37}
.card{display:flex;box-sizing:border-box;height:180px;padding:30px 24px 0;border-radius:24px;background:#154232}
.disc{display:flex;align-items:center;justify-content:center;flex:none;width:120px;height:120px;border-radius:50%;background:#2c5546;color:#8d9598}
.txt{margin-left:24px;flex:1}
b,span{display:block;font-size:42px;line-height:48px;white-space:nowrap}
b{font-weight:700;margin-top:1px;letter-spacing:-.1px}
span{color:#a1b8af;margin-top:9px}
.time{font-size:36px;line-height:42px;margin-top:83px}
</style>
<svg class="tail" viewBox="0 0 21 33"><path d="M-1 0H15.500Q21 0 21 5.500Q21 7.500 19.500 9.500L0 32.500H-1Z"/></svg>
<div class="card"><div class="disc"><ui-icon name="missed"></ui-icon></div>
<div class="txt"><b>Voice call</b><span>No answer</span></div><span class="time">14:26</span></div>`);

/* ---------- composer ---------- */
define('chat-composer', `<style>
:host{display:flex;position:relative;align-items:flex-start;margin-top:21px;padding-left:14.500px}
.pill{display:flex;align-items:center;box-sizing:border-box;width:891px;height:141px;margin-top:5px;border-radius:71px;padding:0 40px 0 39.500px;background:#1f272a;color:#8d9598}
.caret{width:6px;height:73px;background:#21c063;margin:-2px 0 0 42px;flex:none}
.ph{flex:1;font-size:54px;line-height:62px;margin-left:-6px;margin-top:0;white-space:nowrap;position:relative}
.mic{display:flex;align-items:center;justify-content:center;width:144px;height:144px;border-radius:50%;background:#21c063;color:#0b1014;margin-left:14.500px;flex:none}
</style>
<div class="pill"><ui-icon name="sticker"></ui-icon><i class="caret"></i><span class="ph">Message</span>
<ui-icon name="clip" style="margin-right:96px"></ui-icon><ui-icon name="rupee" style="margin-right:84px"></ui-icon><ui-icon name="camera"></ui-icon></div>
<div class="mic"><ui-icon name="mic" style="margin-top:-3px"></ui-icon></div>`);

define('nav-bar', `<style>
:host{display:flex;align-items:center;height:144px;background:#000;color:#ddd;padding-left:223px}
</style><ui-icon name="recents"></ui-icon><ui-icon name="home" style="margin-left:257.500px"></ui-icon><ui-icon name="prev" style="margin-left:263px"></ui-icon>`);

define('phone-screen', `<style>
:host{display:flex;flex-direction:column;width:1080px;height:2340px;background:#0b1014}
main{position:relative;flex:1;overflow:hidden}
chat-wallpaper{position:absolute;left:0;top:0}
.list{position:relative;display:flex;flex-direction:column;padding:0 51px}
.list :first-child{margin-top:2px}
</style>
<status-bar></status-bar>
<chat-header>+91 77538 86…</chat-header>
<main><chat-wallpaper></chat-wallpaper>
<div class="list">
<chat-bubble deleted time="14:25">You deleted this message</chat-bubble>
<call-bubble></call-bubble>
<chat-bubble deleted tail style="margin-top:31px" time="14:26">You deleted this message</chat-bubble>
<chat-bubble incoming tail time="14:27">Idiot tu Tera khandan</chat-bubble>
<chat-bubble incoming time="14:27">Chal nikal</chat-bubble>
<chat-bubble incoming time="14:27">Bhisdi ke</chat-bubble>
<chat-bubble incoming time="14:27">Kaam krne aata nhi h</chat-bubble>
<chat-bubble deleted tail time="14:27" style="margin-top:29px">You deleted this message</chat-bubble>
<chat-bubble deleted time="14:28">You deleted this message</chat-bubble>
<chat-bubble deleted time="14:28">You deleted this message</chat-bubble>
<chat-bubble deleted time="14:32">You deleted this message</chat-bubble>
<chat-bubble deleted time="14:34">You deleted this message</chat-bubble>
<chat-bubble deleted time="14:35">You deleted this message</chat-bubble>
<chat-bubble sent time="16:38">Kya gaaliyan de rahi ho</chat-bubble>
</div>
<chat-composer></chat-composer>
</main>
<nav-bar></nav-bar>`);
</script>
</body>
</html>
